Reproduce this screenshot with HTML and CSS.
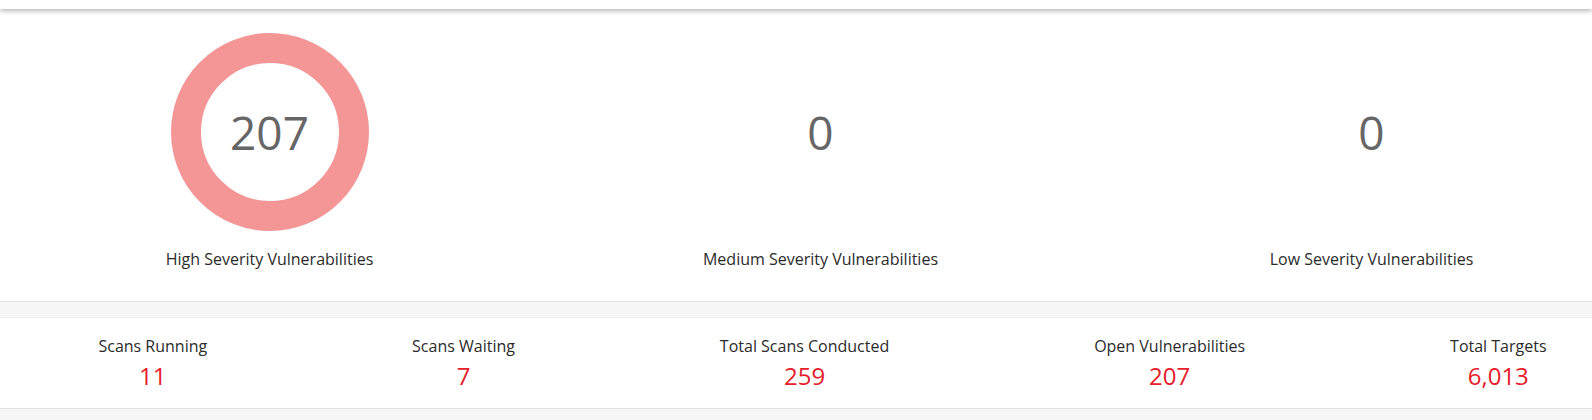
FILE: index.html
```html
<!DOCTYPE html>
<html lang="en">
<head>
<meta charset="utf-8">
<title>Vulnerability Dashboard</title>
<link rel="stylesheet" href="styles.css">
</head>
<body>
<div class="page">
  <header class="topbar"></header>
  <section class="card severity-card">
    <div class="row severity-row">
      <div class="severity">
        <div class="gauge gauge-high"><span class="gauge-value">207</span></div>
        <div class="severity-label">High Severity Vulnerabilities</div>
      </div>
      <div class="severity">
        <div class="gauge"><span class="gauge-value">0</span></div>
        <div class="severity-label">Medium Severity Vulnerabilities</div>
      </div>
      <div class="severity">
        <div class="gauge"><span class="gauge-value">0</span></div>
        <div class="severity-label">Low Severity Vulnerabilities</div>
      </div>
    </div>
  </section>
  <section class="card stats-card">
    <div class="row stats-row">
      <div class="stat"><div class="stat-label">Scans Running</div><div class="stat-value">11</div></div>
      <div class="stat"><div class="stat-label">Scans Waiting</div><div class="stat-value">7</div></div>
      <div class="stat"><div class="stat-label">Total Scans Conducted</div><div class="stat-value">259</div></div>
      <div class="stat"><div class="stat-label">Open Vulnerabilities</div><div class="stat-value">207</div></div>
      <div class="stat"><div class="stat-label">Total Targets</div><div class="stat-value">6,013</div></div>
    </div>
  </section>
</div>
</body>
</html>
```
FILE: styles.css
```css
html, body {
  margin: 0;
  padding: 0;
  overflow: hidden;
  background: #f6f6f6;
  font-family: "Open Sans", "Noto Sans", "DejaVu Sans", sans-serif;
}

.page {
  width: 1592px;
  height: 420px;
  overflow: hidden;
  background: #f6f6f6;
}

.topbar {
  position: relative;
  z-index: 2;
  height: 9px;
  background: #ffffff;
  box-shadow: 0 2px 5px rgba(0, 0, 0, 0.28);
}

.card {
  background: #ffffff;
  border-bottom: 1px solid #e3e3e3;
}

.row {
  width: 1653px;
}

/* Severity row */
.severity-row {
  display: grid;
  grid-template-columns: repeat(3, 1fr);
  margin-left: -6px;
}

.severity {
  display: flex;
  flex-direction: column;
  align-items: center;
  padding: 24px 0 31px;
}

.gauge {
  width: 198px;
  height: 198px;
  box-sizing: border-box;
  border-radius: 50%;
  display: flex;
  align-items: center;
  justify-content: center;
}

.gauge-high {
  border: 30px solid #f59696;
}

.gauge-value {
  font-size: 46px;
  line-height: 1;
  color: #666666;
}

.severity-label {
  margin-top: 17px;
  font-size: 16px;
  line-height: 22px;
  color: #2b2b2b;
}

/* Stats row */
.stats-card {
  margin-top: 16px;
  box-shadow: 0 -1px 0 #eeeeee;
}

.stats-row {
  display: flex;
  justify-content: space-around;
  margin-left: -4px;
  padding: 17px 0 17px;
}

.stat {
  display: flex;
  flex-direction: column;
  align-items: center;
}

.stat-label {
  font-size: 16px;
  line-height: 22px;
  color: #2b2b2b;
}

.stat-value {
  margin-top: 4px;
  font-size: 24px;
  line-height: 30px;
  color: #e6202a;
}
```
